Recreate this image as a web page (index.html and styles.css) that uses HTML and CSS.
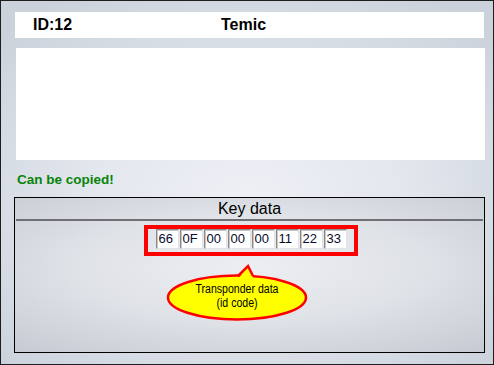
FILE: index.html
```html
<!DOCTYPE html>
<html>
<head>
<meta charset="utf-8">
<link rel="stylesheet" href="styles.css">
</head>
<body>
<div class="frame">
  <div class="header">
    <span class="id">ID:12</span>
    <span class="name">Temic</span>
  </div>
  <div class="panel"></div>
  <div class="status">Can be copied!</div>
  <div class="keybox">
    <div class="title">Key data</div>
    <div class="sep"></div>
    <div class="redbox">
      <div class="cells">
        <div class="cell">66</div>
        <div class="cell">0F</div>
        <div class="cell">00</div>
        <div class="cell">00</div>
        <div class="cell">00</div>
        <div class="cell">11</div>
        <div class="cell">22</div>
        <div class="cell">33</div>
      </div>
    </div>
    <svg class="bubble" width="160" height="63" viewBox="0 0 160 63">
      <ellipse cx="77" cy="35.5" rx="69" ry="22" fill="#ffff00" stroke="#ff0000" stroke-width="2.5"/>
      <polygon points="78,17 88,4 94,18" fill="#ffff00"/>
      <polyline points="78,14 88,4 93,14" fill="none" stroke="#ff0000" stroke-width="2.5" stroke-linejoin="miter"/>
    </svg>
    <div class="bubble-text">Transponder data<br>(id code)</div>
  </div>
</div>
</body>
</html>
```

FILE: styles.css
```css
html, body {
  margin: 0;
  padding: 0;
}
body {
  font-family: "Liberation Sans", Arial, sans-serif;
  background: #d3d9e1;
}
.frame {
  width: 494px;
  height: 365px;
  box-sizing: border-box;
  border: 1px solid #1e1e1e;
  padding: 11px 0 0 14px;
  background: radial-gradient(ellipse 70% 65% at 50% 55%, #eef0f5 0%, #e3e7ee 45%, #cbd2db 100%);
  overflow: hidden;
}
.header {
  width: 469px;
  height: 26px;
  background: #ffffff;
  display: grid;
  grid-template-columns: 188px auto;
  padding-left: 18px;
  box-sizing: border-box;
  font-weight: bold;
  font-size: 16px;
  line-height: 26px;
  color: #000;
}
.panel {
  margin: 10px 0 0 1px;
  width: 469px;
  height: 112px;
  background: #ffffff;
}
.status {
  margin: 12px 0 0 2px;
  font-size: 13.5px;
  font-weight: bold;
  line-height: 15px;
  color: #08830a;
}
.keybox {
  position: relative;
  margin: 10px 0 0 -1px;
  width: 471px;
  height: 156px;
  box-sizing: border-box;
  border: 1px solid #000;
  background: radial-gradient(ellipse 75% 70% at 50% 45%, #eceef2 0%, #dfe2e7 50%, #c7ccd4 100%);
  display: flex;
  flex-direction: column;
  align-items: center;
}
.title {
  height: 21px;
  line-height: 21px;
  font-size: 16px;
  color: #000;
  text-align: center;
}
.sep {
  align-self: stretch;
  margin: 0 1px;
  height: 2px;
  background: #6f7073;
}
.redbox {
  margin: 4px 0 0 2px;
  border: 4px solid #ff0000;
  padding: 0 7px 3px 8px;
}
.cells {
  display: flex;
  gap: 1px;
}
.cell {
  width: 23px;
  height: 20px;
  box-sizing: border-box;
  background: #fff;
  border: 1px solid;
  border-color: #8a8a8a #e3e3e3 #e3e3e3 #8a8a8a;
  box-shadow: inset 1px 1px 0 #c8c8c8;
  font-size: 13px;
  line-height: 18px;
  padding-left: 2px;
  color: #0a0a28;
}
.bubble {
  position: absolute;
  left: 145px;
  top: 64px;
}
.bubble-text {
  position: absolute;
  left: 162px;
  top: 84px;
  width: 120px;
  text-align: center;
  font-size: 12px;
  line-height: 14px;
  transform: scaleX(0.88);
  color: #000;
}
```
